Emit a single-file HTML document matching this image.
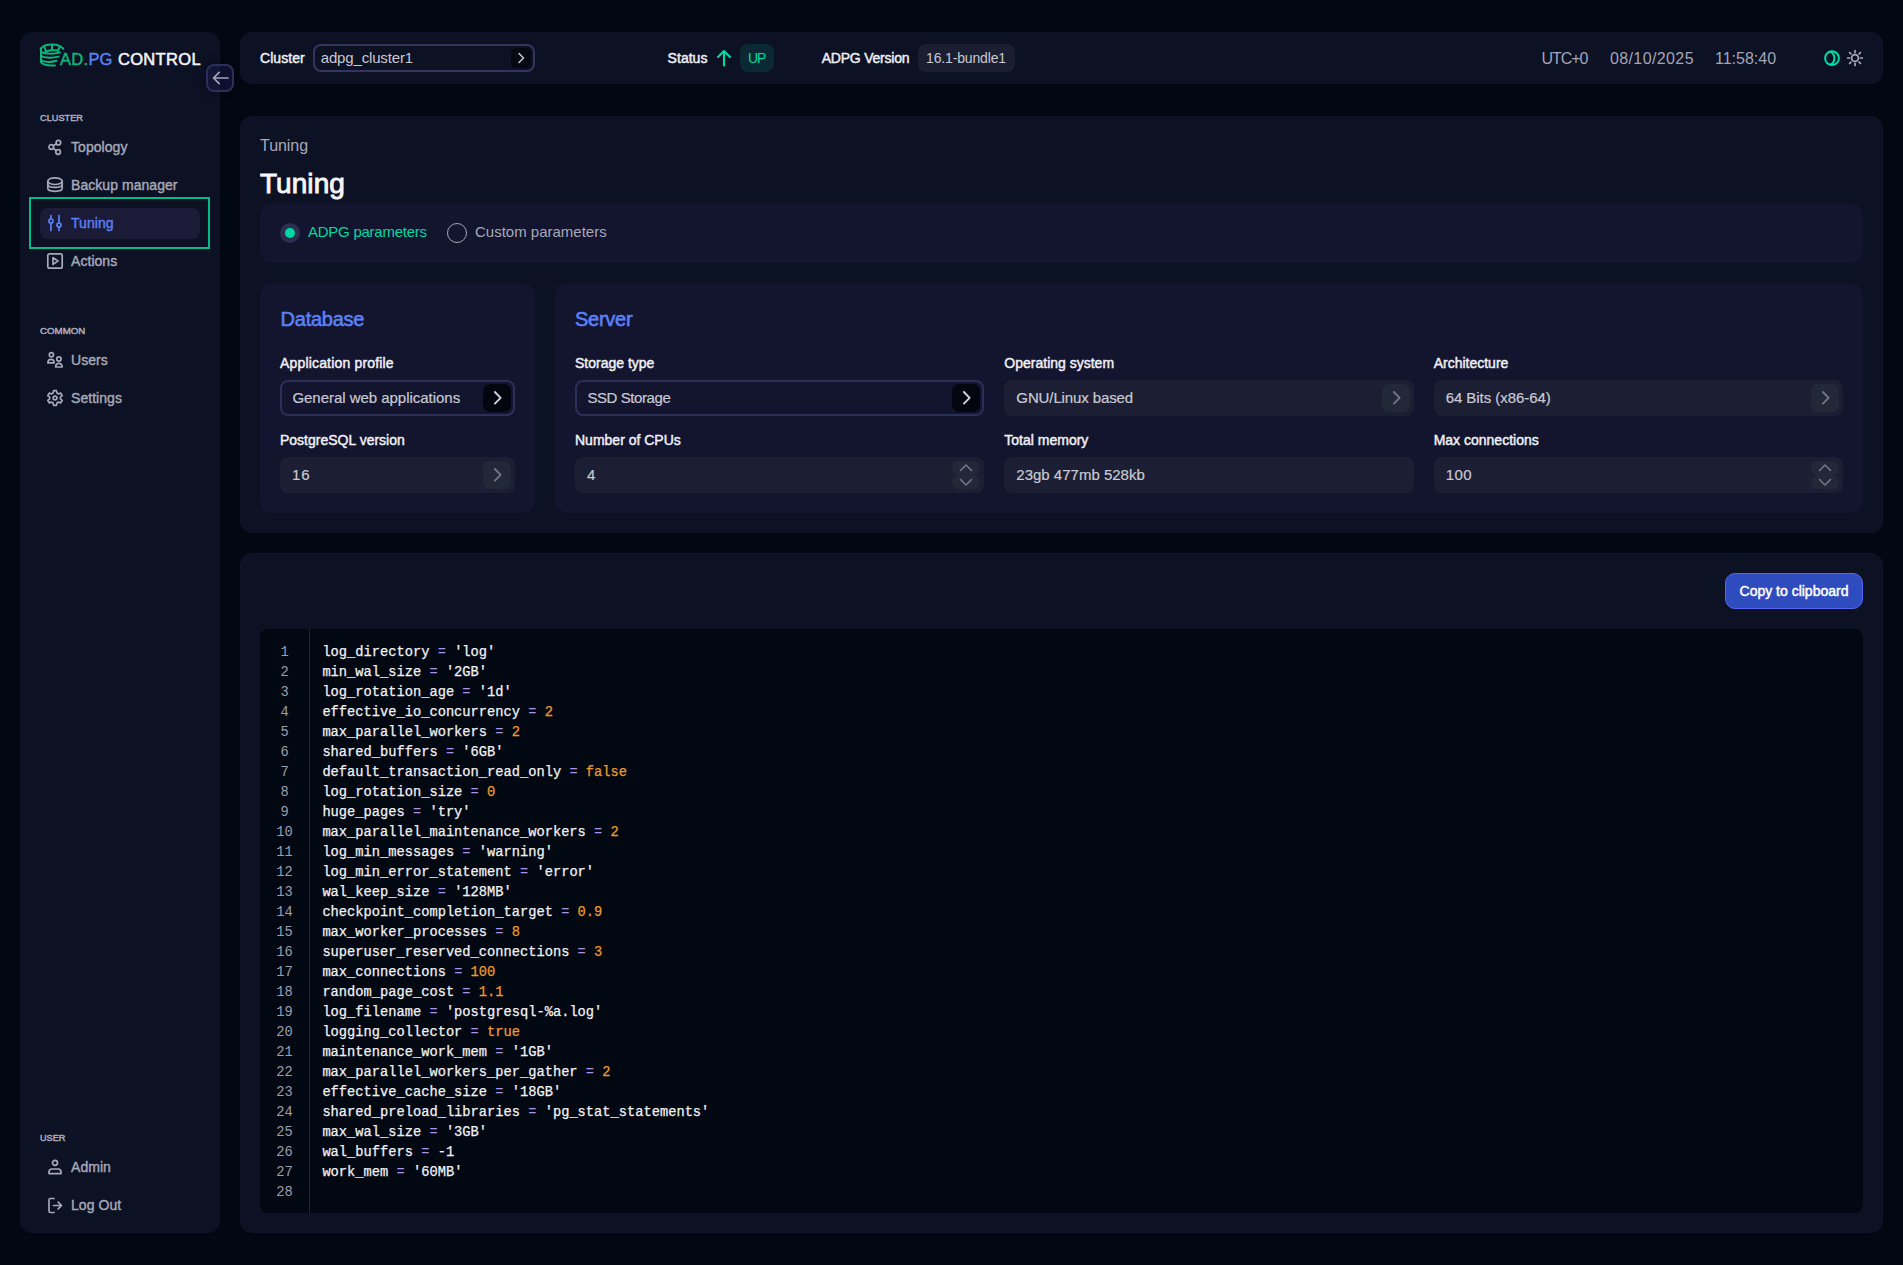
<!DOCTYPE html>
<html><head><meta charset="utf-8">
<style>
*{box-sizing:border-box;margin:0;padding:0}
html,body{width:1903px;height:1265px;overflow:hidden;background:#010812;font-family:"Liberation Sans",sans-serif}
.t,.r{position:absolute}
.t{white-space:nowrap}
</style></head><body>
<div class="r" style="left:20px;top:32px;width:200px;height:1201px;background:#0c1124;border-radius:12px;border:1px solid #10122a"></div>
<div class="r" style="left:240px;top:32px;width:1643px;height:52px;background:#0c1124;border-radius:12px;border:1px solid #10122a"></div>
<div class="r" style="left:240px;top:116px;width:1643px;height:417px;background:#0c1124;border-radius:12px;border:1px solid #10122a"></div>
<div class="r" style="left:240px;top:553px;width:1643px;height:680px;background:#0c1124;border-radius:12px;border:1px solid #10122a"></div>
<svg class="r" style="left:36px;top:40px" width="30" height="28" viewBox="0 0 30 28" fill="none"><g stroke="#0fb67b" stroke-width="2" stroke-linecap="round">
<path d="M5,8.5 V22"/>
<path d="M4.6,9 C6.5,5.5 12,4.4 16,4.4 C21,4.4 25.5,6.3 27.3,8.8"/>
<path d="M9.8,11.6 C13,10.2 18,10 22,10.6"/>
<path d="M8.4,6.8 L10,11.5 M16,5 V10.3 M23.4,7.4 L22,10.6"/>
<path d="M5,12 C9,14 18,14.2 24,12.4"/>
<path d="M5,16.2 C9,18 17,18.2 22.6,16.6"/>
<path d="M5,20.3 C9,22 16,22.2 20.6,20.8"/>
<path d="M5,22 C6.5,24.6 12,25.8 19,25.4"/>
</g></svg>
<div class="t" style="left:60px;top:50.83px;font-size:16.5px;line-height:16.5px;font-weight:400;letter-spacing:0px"><span style="color:#0fb67b;-webkit-text-stroke:0.45px #0fb67b;letter-spacing:0.35px">AD.</span><span style="color:#5b82f5;-webkit-text-stroke:0.4px #5b82f5">PG</span><span style="display:inline-block;width:5.5px"></span><span style="color:#f4f4f8;-webkit-text-stroke:0.55px #f4f4f8;letter-spacing:0.34px">CONTROL</span></div>
<div class="r" style="left:206px;top:64px;width:28px;height:28px;background:rgba(28,26,78,0.45);border-radius:8px;border:2px solid #2b2f5c;box-shadow:0 0 10px rgba(0,0,0,.45)"></div>
<svg class="r" style="left:206px;top:64px" width="28" height="28" viewBox="0 0 28 28" fill="none"><path d="M22,14 H7.5 M13.2,8.3 L7.5,14 L13.2,19.7" stroke="#a3a4b7" stroke-width="1.7" stroke-linecap="round" stroke-linejoin="round"/></svg>
<div class="t" style="left:40px;top:113.30px;font-size:9.8px;line-height:9.8px;font-weight:400;color:#a9abbd;-webkit-text-stroke:0.5px #a9abbd;transform:scaleX(0.939);transform-origin:0 0;">CLUSTER</div>
<div class="t" style="left:71px;top:140.15px;font-size:14px;line-height:14px;font-weight:400;color:#a7a8b8;-webkit-text-stroke:0.4px #a7a8b8;letter-spacing:0.05px;">Topology</div>
<svg class="r" style="left:46px;top:138px" width="18" height="18" viewBox="0 0 18 18" fill="none"><g stroke="#a7a8b8" stroke-width="1.7" stroke-linecap="round" stroke-linejoin="round" fill="none"><circle cx="12.4" cy="4.7" r="2.3"/><circle cx="5.3" cy="9" r="2.3"/><circle cx="12.1" cy="14" r="2.3"/><path d="M7.3,7.8 L10.3,5.9 M7.3,10.3 L10.2,12.6"/></g></svg>
<div class="t" style="left:71px;top:178.15px;font-size:14px;line-height:14px;font-weight:400;color:#a7a8b8;-webkit-text-stroke:0.4px #a7a8b8;letter-spacing:0.05px;">Backup manager</div>
<svg class="r" style="left:46px;top:176px" width="18" height="18" viewBox="0 0 18 18" fill="none"><g stroke="#a7a8b8" stroke-width="1.7" stroke-linecap="round" stroke-linejoin="round" fill="none"><ellipse cx="9" cy="5.15" rx="7.2" ry="3.35"/><path d="M1.8,5.15 V12.3 C1.8,14.2 5,15.3 9,15.3 C13,15.3 16.2,14.2 16.2,12.3 V5.15"/><path d="M1.8,8.4 C1.8,10.2 5,11.3 9,11.3 C13,11.3 16.2,10.2 16.2,8.4"/></g></svg>
<div class="r" style="left:29px;top:197px;width:181px;height:52px;background:transparent;border-radius:0px;border:2px solid #03bb8a"></div>
<div class="r" style="left:40px;top:208px;width:160px;height:31px;background:#1b1b38;border-radius:8px;"></div>
<div class="t" style="left:71px;top:216.15px;font-size:14px;line-height:14px;font-weight:400;color:#5b80f4;-webkit-text-stroke:0.4px #5b80f4;letter-spacing:0.05px;">Tuning</div>
<svg class="r" style="left:46px;top:214px" width="18" height="18" viewBox="0 0 18 18" fill="none"><g stroke="#5b80f4" stroke-width="1.7" stroke-linecap="round" stroke-linejoin="round" fill="none"><path d="M4.9,1.5 V16.5 M13,1.5 V16.5"/><circle cx="4.9" cy="7" r="2" fill="#1b1b38"/><circle cx="13" cy="11" r="2" fill="#1b1b38"/></g></svg>
<div class="t" style="left:71px;top:254.15px;font-size:14px;line-height:14px;font-weight:400;color:#a7a8b8;-webkit-text-stroke:0.4px #a7a8b8;letter-spacing:0.05px;">Actions</div>
<svg class="r" style="left:46px;top:252px" width="18" height="18" viewBox="0 0 18 18" fill="none"><g stroke="#a7a8b8" stroke-width="1.7" stroke-linecap="round" stroke-linejoin="round" fill="none"><rect x="1.8" y="1.8" width="14.4" height="14.4" rx="1.8"/><path d="M7,5.6 L12,9 L7,12.4 Z"/></g></svg>
<div class="t" style="left:40px;top:326.30px;font-size:9.8px;line-height:9.8px;font-weight:400;color:#a9abbd;-webkit-text-stroke:0.5px #a9abbd;transform:scaleX(0.992);transform-origin:0 0;">COMMON</div>
<div class="t" style="left:71px;top:353.15px;font-size:14px;line-height:14px;font-weight:400;color:#a7a8b8;-webkit-text-stroke:0.4px #a7a8b8;letter-spacing:0.05px;">Users</div>
<svg class="r" style="left:46px;top:351px" width="18" height="18" viewBox="0 0 18 18" fill="none"><g stroke="#a7a8b8" stroke-width="1.7" stroke-linecap="round" stroke-linejoin="round" fill="none"><circle cx="5.4" cy="3.8" r="2.1"/><path d="M1.9,11.9 C1.9,9.4 3.4,8.3 5,8.3 C6.6,8.3 8.1,9.4 8.1,11.9 Z"/><circle cx="12.9" cy="8" r="2.2"/><path d="M9.7,16 C9.7,13.5 11.2,12.3 12.9,12.3 C14.6,12.3 16.1,13.5 16.1,16 Z"/></g></svg>
<div class="t" style="left:71px;top:391.15px;font-size:14px;line-height:14px;font-weight:400;color:#a7a8b8;-webkit-text-stroke:0.4px #a7a8b8;letter-spacing:0.05px;">Settings</div>
<svg class="r" style="left:46px;top:389px" width="18" height="18" viewBox="0 0 18 18" fill="none"><g stroke="#a7a8b8" stroke-width="1.7" stroke-linecap="round" stroke-linejoin="round" fill="none"><path d="M7.6,1.6 H10.4 L10.9,3.9 L12.6,4.9 L14.8,4.1 L16.2,6.6 L14.4,8.1 V9.9 L16.2,11.4 L14.8,13.9 L12.6,13.1 L10.9,14.1 L10.4,16.4 H7.6 L7.1,14.1 L5.4,13.1 L3.2,13.9 L1.8,11.4 L3.6,9.9 V8.1 L1.8,6.6 L3.2,4.1 L5.4,4.9 L7.1,3.9 Z"/><circle cx="9" cy="9" r="1.9"/></g></svg>
<div class="t" style="left:40px;top:1133.30px;font-size:9.8px;line-height:9.8px;font-weight:400;color:#a9abbd;-webkit-text-stroke:0.5px #a9abbd;transform:scaleX(0.93);transform-origin:0 0;">USER</div>
<div class="t" style="left:71px;top:1160.15px;font-size:14px;line-height:14px;font-weight:400;color:#a7a8b8;-webkit-text-stroke:0.4px #a7a8b8;letter-spacing:0.05px;">Admin</div>
<svg class="r" style="left:46px;top:1158px" width="18" height="18" viewBox="0 0 18 18" fill="none"><g stroke="#a7a8b8" stroke-width="1.7" stroke-linecap="round" stroke-linejoin="round" fill="none"><circle cx="9" cy="4.8" r="2.5"/><path d="M3,15.6 V14 C3,12.3 4.3,11 6,11 H12 C13.7,11 15,12.3 15,14 V15.6 Z"/></g></svg>
<div class="t" style="left:71px;top:1198.15px;font-size:14px;line-height:14px;font-weight:400;color:#a7a8b8;-webkit-text-stroke:0.4px #a7a8b8;letter-spacing:0.05px;">Log Out</div>
<svg class="r" style="left:46px;top:1196px" width="18" height="18" viewBox="0 0 18 18" fill="none"><g stroke="#a7a8b8" stroke-width="1.7" stroke-linecap="round" stroke-linejoin="round" fill="none"><path d="M8,2.5 H4.4 C3.6,2.5 3,3.1 3,3.9 V15.1 C3,15.9 3.6,16.5 4.4,16.5 H8"/><path d="M7.5,9.5 H15.5 M12.2,6.2 L15.5,9.5 L12.2,12.8"/></g></svg>
<div class="t" style="left:260px;top:51.15px;font-size:14px;line-height:14px;font-weight:400;color:#f0f0f5;-webkit-text-stroke:0.45px #f0f0f5;letter-spacing:0.05px;">Cluster</div>
<div class="r" style="left:313px;top:44px;width:222px;height:28px;background:transparent;border-radius:8px;border:2px solid #34345f"></div>
<div class="t" style="left:320.7px;top:49.90px;font-size:15px;line-height:15px;font-weight:400;color:#c9c9d3;letter-spacing:-0.15px;">adpg_cluster1</div>
<div class="r" style="left:511px;top:48px;width:20px;height:20px;background:#060812;border-radius:5px;"></div>
<svg class="r" style="left:516px;top:52px" width="10" height="12" viewBox="0 0 10 12" fill="none"><path d="M3,1.5 L7.5,6 L3,10.5" stroke="#c8c9d4" stroke-width="1.5" stroke-linecap="round" stroke-linejoin="round"/></svg>
<div class="t" style="left:667.6px;top:51.15px;font-size:14px;line-height:14px;font-weight:400;color:#f0f0f5;-webkit-text-stroke:0.45px #f0f0f5;letter-spacing:0.03px;">Status</div>
<svg class="r" style="left:716px;top:48px" width="16" height="20" viewBox="0 0 16 20" fill="none"><path d="M8,17.5 V3 M2,9 L8,3 L14,9" stroke="#00dba5" stroke-width="2.1" stroke-linecap="round" stroke-linejoin="round"/></svg>
<div class="r" style="left:740px;top:44px;width:34px;height:28px;background:#0b2934;border-radius:8px;"></div>
<div class="t" style="left:748px;top:51.15px;font-size:14px;line-height:14px;font-weight:400;color:#00dba5;letter-spacing:-1.0px;">UP</div>
<div class="t" style="left:821.7px;top:51.15px;font-size:14px;line-height:14px;font-weight:400;color:#f0f0f5;-webkit-text-stroke:0.45px #f0f0f5;letter-spacing:-0.22px;">ADPG Version</div>
<div class="r" style="left:918px;top:44px;width:97px;height:28px;background:#1b1e30;border-radius:8px;"></div>
<div class="t" style="left:926px;top:51.15px;font-size:14px;line-height:14px;font-weight:400;color:#c9c9d3;letter-spacing:-0.15px;">16.1-bundle1</div>
<div class="t" style="left:1541.6px;top:51.26px;font-size:16px;line-height:16px;font-weight:400;color:#a3a5b6;letter-spacing:-1.1px;">UTC+0</div>
<div class="t" style="left:1609.9px;top:51.26px;font-size:16px;line-height:16px;font-weight:400;color:#a3a5b6;letter-spacing:0.4px;">08/10/2025</div>
<div class="t" style="left:1715px;top:51.26px;font-size:16px;line-height:16px;font-weight:400;color:#a3a5b6;">11:58:40</div>
<svg class="r" style="left:1822px;top:48px" width="20" height="20" viewBox="0 0 20 20" fill="none"><g stroke="#00dba5" stroke-width="2" fill="none"><circle cx="10" cy="10.2" r="6.9"/><path d="M8.2,3.6 C11.3,5.2 12.4,7.6 12.4,10.2 C12.4,12.8 11.3,15.2 8.2,16.8"/></g></svg>
<svg class="r" style="left:1845px;top:48px" width="20" height="20" viewBox="0 0 20 20" fill="none"><g stroke="#a9aabb" stroke-width="1.7" stroke-linecap="round" fill="none"><circle cx="10" cy="10" r="3.4"/><path d="M10,2.6 V4.6 M10,15.4 V17.4 M2.6,10 H4.6 M15.4,10 H17.4 M4.6,4.6 L5.9,5.9 M14.1,14.1 L15.4,15.4 M4.6,15.4 L5.9,14.1 M14.1,5.9 L15.4,4.6"/></g></svg>
<div class="t" style="left:260px;top:138.46px;font-size:16px;line-height:16px;font-weight:400;color:#a7a8b8;letter-spacing:-0.05px;">Tuning</div>
<div class="t" style="left:260px;top:170.30px;font-size:28px;line-height:28px;font-weight:400;color:#f6f6fa;-webkit-text-stroke:0.9px #f6f6fa;letter-spacing:0.05px;">Tuning</div>
<div class="r" style="left:260px;top:203px;width:1603px;height:60px;background:#13142e;border-radius:12px;"></div>
<div class="r" style="left:280px;top:223px;width:20px;height:20px;background:#2b3051;border-radius:10px;"></div>
<div class="r" style="left:285px;top:228px;width:10px;height:10px;background:#00d8a3;border-radius:5px;"></div>
<div class="t" style="left:308px;top:224.10px;font-size:15px;line-height:15px;font-weight:400;color:#00d8a3;letter-spacing:-0.25px;">ADPG parameters</div>
<div class="r" style="left:447px;top:223px;width:20px;height:20px;background:transparent;border-radius:10px;border:1.5px solid #a6a7b6"></div>
<div class="t" style="left:475px;top:224.10px;font-size:15px;line-height:15px;font-weight:400;color:#a7a8b8;">Custom parameters</div>
<div class="r" style="left:260px;top:283px;width:275px;height:230px;background:#13142e;border-radius:12px;"></div>
<div class="r" style="left:555px;top:283px;width:1308px;height:230px;background:#13142e;border-radius:12px;"></div>
<div class="t" style="left:280.6px;top:308.57px;font-size:20px;line-height:20px;font-weight:400;color:#5b80f4;-webkit-text-stroke:0.6px #5b80f4;letter-spacing:-0.25px;">Database</div>
<div class="t" style="left:575px;top:308.57px;font-size:20px;line-height:20px;font-weight:400;color:#5b80f4;-webkit-text-stroke:0.6px #5b80f4;letter-spacing:-0.25px;">Server</div>
<div class="t" style="left:280px;top:356.15px;font-size:14px;line-height:14px;font-weight:400;color:#f0f0f5;-webkit-text-stroke:0.45px #f0f0f5;letter-spacing:0.17px;">Application profile</div>
<div class="r" style="left:280px;top:380px;width:235px;height:36px;background:transparent;border-radius:8px;border:2px solid #2c3058"></div>
<div class="t" style="left:292.4px;top:389.60px;font-size:15px;line-height:15px;font-weight:400;color:#c9c9d3;-webkit-text-stroke:0.2px #c9c9d3;letter-spacing:-0.03px;">General web applications</div>
<div class="r" style="left:483px;top:384px;width:28px;height:28px;background:#03060e;border-radius:7px;"></div>
<svg class="r" style="left:492px;top:390px" width="10" height="16" viewBox="0 0 10 16" fill="none"><path d="M2.9,2 L8.6,7.8 L2.9,13.6" stroke="#d2d3dc" stroke-width="1.9" stroke-linecap="round" stroke-linejoin="round"/></svg>
<div class="t" style="left:280px;top:433.15px;font-size:14px;line-height:14px;font-weight:400;color:#f0f0f5;-webkit-text-stroke:0.45px #f0f0f5;">PostgreSQL version</div>
<div class="r" style="left:280px;top:457px;width:235px;height:36px;background:#1c1f34;border-radius:8px;"></div>
<div class="t" style="left:292px;top:466.60px;font-size:15px;line-height:15px;font-weight:400;color:#c9c9d3;-webkit-text-stroke:0.2px #c9c9d3;letter-spacing:0.8px;">16</div>
<div class="r" style="left:483px;top:461px;width:28px;height:28px;background:#232839;border-radius:7px;"></div>
<svg class="r" style="left:492px;top:467px" width="10" height="16" viewBox="0 0 10 16" fill="none"><path d="M2.9,2 L8.6,7.8 L2.9,13.6" stroke="#737586" stroke-width="1.9" stroke-linecap="round" stroke-linejoin="round"/></svg>
<div class="t" style="left:575px;top:356.15px;font-size:14px;line-height:14px;font-weight:400;color:#f0f0f5;-webkit-text-stroke:0.45px #f0f0f5;">Storage type</div>
<div class="t" style="left:1004.33px;top:356.15px;font-size:14px;line-height:14px;font-weight:400;color:#f0f0f5;-webkit-text-stroke:0.45px #f0f0f5;">Operating system</div>
<div class="t" style="left:1433.67px;top:356.15px;font-size:14px;line-height:14px;font-weight:400;color:#f0f0f5;-webkit-text-stroke:0.45px #f0f0f5;">Architecture</div>
<div class="r" style="left:575px;top:380px;width:409.33000000000004px;height:36px;background:transparent;border-radius:8px;border:2px solid #2c3058"></div>
<div class="t" style="left:587.4px;top:389.60px;font-size:15px;line-height:15px;font-weight:400;color:#c9c9d3;-webkit-text-stroke:0.2px #c9c9d3;letter-spacing:-0.42px;">SSD Storage</div>
<div class="r" style="left:952.33px;top:384px;width:28.0px;height:28px;background:#03060e;border-radius:7px;"></div>
<svg class="r" style="left:961.33px;top:390px" width="10" height="16" viewBox="0 0 10 16" fill="none"><path d="M2.9,2 L8.6,7.8 L2.9,13.6" stroke="#d2d3dc" stroke-width="1.9" stroke-linecap="round" stroke-linejoin="round"/></svg>
<div class="r" style="left:1004.33px;top:380px;width:409.34000000000003px;height:36px;background:#1c1f34;border-radius:8px;"></div>
<div class="t" style="left:1016.33px;top:389.60px;font-size:15px;line-height:15px;font-weight:400;color:#c9c9d3;-webkit-text-stroke:0.2px #c9c9d3;letter-spacing:-0.11px;">GNU/Linux based</div>
<div class="r" style="left:1381.67px;top:384px;width:28.0px;height:28px;background:#232839;border-radius:7px;"></div>
<svg class="r" style="left:1390.67px;top:390px" width="10" height="16" viewBox="0 0 10 16" fill="none"><path d="M2.9,2 L8.6,7.8 L2.9,13.6" stroke="#737586" stroke-width="1.9" stroke-linecap="round" stroke-linejoin="round"/></svg>
<div class="r" style="left:1433.67px;top:380px;width:409.3299999999999px;height:36px;background:#1c1f34;border-radius:8px;"></div>
<div class="t" style="left:1445.67px;top:389.60px;font-size:15px;line-height:15px;font-weight:400;color:#c9c9d3;-webkit-text-stroke:0.2px #c9c9d3;letter-spacing:-0.05px;">64 Bits (x86-64)</div>
<div class="r" style="left:1811px;top:384px;width:28px;height:28px;background:#232839;border-radius:7px;"></div>
<svg class="r" style="left:1820px;top:390px" width="10" height="16" viewBox="0 0 10 16" fill="none"><path d="M2.9,2 L8.6,7.8 L2.9,13.6" stroke="#737586" stroke-width="1.9" stroke-linecap="round" stroke-linejoin="round"/></svg>
<div class="t" style="left:575px;top:433.15px;font-size:14px;line-height:14px;font-weight:400;color:#f0f0f5;-webkit-text-stroke:0.45px #f0f0f5;">Number of CPUs</div>
<div class="t" style="left:1004.33px;top:433.15px;font-size:14px;line-height:14px;font-weight:400;color:#f0f0f5;-webkit-text-stroke:0.45px #f0f0f5;">Total memory</div>
<div class="t" style="left:1433.67px;top:433.15px;font-size:14px;line-height:14px;font-weight:400;color:#f0f0f5;-webkit-text-stroke:0.45px #f0f0f5;">Max connections</div>
<div class="r" style="left:575px;top:457px;width:409.33000000000004px;height:36px;background:#1c1f34;border-radius:8px;"></div>
<div class="t" style="left:587px;top:466.60px;font-size:15px;line-height:15px;font-weight:400;color:#c9c9d3;-webkit-text-stroke:0.2px #c9c9d3;letter-spacing:-0.25px;">4</div>
<div class="r" style="left:952.33px;top:461px;width:28.0px;height:14px;background:#232839;border-radius:7px;"></div>
<div class="r" style="left:952.33px;top:475px;width:28.0px;height:14px;background:#232839;border-radius:7px;"></div>
<svg class="r" style="left:959.33px;top:462px" width="14" height="26" viewBox="0 0 14 26" fill="none"><g stroke="#737586" stroke-width="1.6" stroke-linecap="round" stroke-linejoin="round"><path d="M1.5,8.5 L7,3 L12.5,8.5"/><path d="M1.5,17.5 L7,23 L12.5,17.5"/></g></svg>
<div class="r" style="left:1004.33px;top:457px;width:409.34000000000003px;height:36px;background:#1c1f34;border-radius:8px;"></div>
<div class="t" style="left:1016.33px;top:466.60px;font-size:15px;line-height:15px;font-weight:400;color:#c9c9d3;-webkit-text-stroke:0.2px #c9c9d3;">23gb 477mb 528kb</div>
<div class="r" style="left:1433.67px;top:457px;width:409.3299999999999px;height:36px;background:#1c1f34;border-radius:8px;"></div>
<div class="t" style="left:1445.67px;top:466.60px;font-size:15px;line-height:15px;font-weight:400;color:#c9c9d3;-webkit-text-stroke:0.2px #c9c9d3;letter-spacing:0.45px;">100</div>
<div class="r" style="left:1811px;top:461px;width:28px;height:14px;background:#232839;border-radius:7px;"></div>
<div class="r" style="left:1811px;top:475px;width:28px;height:14px;background:#232839;border-radius:7px;"></div>
<svg class="r" style="left:1818px;top:462px" width="14" height="26" viewBox="0 0 14 26" fill="none"><g stroke="#737586" stroke-width="1.6" stroke-linecap="round" stroke-linejoin="round"><path d="M1.5,8.5 L7,3 L12.5,8.5"/><path d="M1.5,17.5 L7,23 L12.5,17.5"/></g></svg>
<div class="r" style="left:1725px;top:573px;width:138px;height:36px;background:#2f4cbf;border-radius:10px;border:1px solid #5567f4"></div>
<div class="t" style="left:1725px;top:583.65px;font-size:14px;line-height:14px;font-weight:400;color:#ffffff;-webkit-text-stroke:0.45px #ffffff;text-align:center;width:138px;">Copy to clipboard</div>
<div class="r" style="left:260px;top:629px;width:1603px;height:584px;background:#020812;border-radius:8px;"></div>
<div class="r" style="left:309px;top:629px;width:1px;height:584px;background:#222735;border-radius:0px;"></div>
<div class="t" style="left:260px;top:646.38px;font-size:13.73px;line-height:13.73px;font-weight:400;color:#9c9eae;font-family:'Liberation Mono',monospace;text-align:center;width:49px;">1</div>
<div class="t" style="left:322.4px;top:646.38px;font-size:13.73px;line-height:13.73px;font-weight:400;color:#f2f2f4;font-family:'Liberation Mono',monospace;-webkit-text-stroke:0.25px currentColor;"><span style="color:#f2f2f4">log_directory</span> <span style="color:#a996ea;-webkit-text-stroke:0">=</span> <span style="color:#f2f2f4">'log'</span></div>
<div class="t" style="left:260px;top:666.38px;font-size:13.73px;line-height:13.73px;font-weight:400;color:#9c9eae;font-family:'Liberation Mono',monospace;text-align:center;width:49px;">2</div>
<div class="t" style="left:322.4px;top:666.38px;font-size:13.73px;line-height:13.73px;font-weight:400;color:#f2f2f4;font-family:'Liberation Mono',monospace;-webkit-text-stroke:0.25px currentColor;"><span style="color:#f2f2f4">min_wal_size</span> <span style="color:#a996ea;-webkit-text-stroke:0">=</span> <span style="color:#f2f2f4">'2GB'</span></div>
<div class="t" style="left:260px;top:686.38px;font-size:13.73px;line-height:13.73px;font-weight:400;color:#9c9eae;font-family:'Liberation Mono',monospace;text-align:center;width:49px;">3</div>
<div class="t" style="left:322.4px;top:686.38px;font-size:13.73px;line-height:13.73px;font-weight:400;color:#f2f2f4;font-family:'Liberation Mono',monospace;-webkit-text-stroke:0.25px currentColor;"><span style="color:#f2f2f4">log_rotation_age</span> <span style="color:#a996ea;-webkit-text-stroke:0">=</span> <span style="color:#f2f2f4">'1d'</span></div>
<div class="t" style="left:260px;top:706.38px;font-size:13.73px;line-height:13.73px;font-weight:400;color:#9c9eae;font-family:'Liberation Mono',monospace;text-align:center;width:49px;">4</div>
<div class="t" style="left:322.4px;top:706.38px;font-size:13.73px;line-height:13.73px;font-weight:400;color:#f2f2f4;font-family:'Liberation Mono',monospace;-webkit-text-stroke:0.25px currentColor;"><span style="color:#f2f2f4">effective_io_concurrency</span> <span style="color:#a996ea;-webkit-text-stroke:0">=</span> <span style="color:#ec9a2e">2</span></div>
<div class="t" style="left:260px;top:726.38px;font-size:13.73px;line-height:13.73px;font-weight:400;color:#9c9eae;font-family:'Liberation Mono',monospace;text-align:center;width:49px;">5</div>
<div class="t" style="left:322.4px;top:726.38px;font-size:13.73px;line-height:13.73px;font-weight:400;color:#f2f2f4;font-family:'Liberation Mono',monospace;-webkit-text-stroke:0.25px currentColor;"><span style="color:#f2f2f4">max_parallel_workers</span> <span style="color:#a996ea;-webkit-text-stroke:0">=</span> <span style="color:#ec9a2e">2</span></div>
<div class="t" style="left:260px;top:746.38px;font-size:13.73px;line-height:13.73px;font-weight:400;color:#9c9eae;font-family:'Liberation Mono',monospace;text-align:center;width:49px;">6</div>
<div class="t" style="left:322.4px;top:746.38px;font-size:13.73px;line-height:13.73px;font-weight:400;color:#f2f2f4;font-family:'Liberation Mono',monospace;-webkit-text-stroke:0.25px currentColor;"><span style="color:#f2f2f4">shared_buffers</span> <span style="color:#a996ea;-webkit-text-stroke:0">=</span> <span style="color:#f2f2f4">'6GB'</span></div>
<div class="t" style="left:260px;top:766.38px;font-size:13.73px;line-height:13.73px;font-weight:400;color:#9c9eae;font-family:'Liberation Mono',monospace;text-align:center;width:49px;">7</div>
<div class="t" style="left:322.4px;top:766.38px;font-size:13.73px;line-height:13.73px;font-weight:400;color:#f2f2f4;font-family:'Liberation Mono',monospace;-webkit-text-stroke:0.25px currentColor;"><span style="color:#f2f2f4">default_transaction_read_only</span> <span style="color:#a996ea;-webkit-text-stroke:0">=</span> <span style="color:#ec9a2e">false</span></div>
<div class="t" style="left:260px;top:786.38px;font-size:13.73px;line-height:13.73px;font-weight:400;color:#9c9eae;font-family:'Liberation Mono',monospace;text-align:center;width:49px;">8</div>
<div class="t" style="left:322.4px;top:786.38px;font-size:13.73px;line-height:13.73px;font-weight:400;color:#f2f2f4;font-family:'Liberation Mono',monospace;-webkit-text-stroke:0.25px currentColor;"><span style="color:#f2f2f4">log_rotation_size</span> <span style="color:#a996ea;-webkit-text-stroke:0">=</span> <span style="color:#ec9a2e">0</span></div>
<div class="t" style="left:260px;top:806.38px;font-size:13.73px;line-height:13.73px;font-weight:400;color:#9c9eae;font-family:'Liberation Mono',monospace;text-align:center;width:49px;">9</div>
<div class="t" style="left:322.4px;top:806.38px;font-size:13.73px;line-height:13.73px;font-weight:400;color:#f2f2f4;font-family:'Liberation Mono',monospace;-webkit-text-stroke:0.25px currentColor;"><span style="color:#f2f2f4">huge_pages</span> <span style="color:#a996ea;-webkit-text-stroke:0">=</span> <span style="color:#f2f2f4">'try'</span></div>
<div class="t" style="left:260px;top:826.38px;font-size:13.73px;line-height:13.73px;font-weight:400;color:#9c9eae;font-family:'Liberation Mono',monospace;text-align:center;width:49px;">10</div>
<div class="t" style="left:322.4px;top:826.38px;font-size:13.73px;line-height:13.73px;font-weight:400;color:#f2f2f4;font-family:'Liberation Mono',monospace;-webkit-text-stroke:0.25px currentColor;"><span style="color:#f2f2f4">max_parallel_maintenance_workers</span> <span style="color:#a996ea;-webkit-text-stroke:0">=</span> <span style="color:#ec9a2e">2</span></div>
<div class="t" style="left:260px;top:846.38px;font-size:13.73px;line-height:13.73px;font-weight:400;color:#9c9eae;font-family:'Liberation Mono',monospace;text-align:center;width:49px;">11</div>
<div class="t" style="left:322.4px;top:846.38px;font-size:13.73px;line-height:13.73px;font-weight:400;color:#f2f2f4;font-family:'Liberation Mono',monospace;-webkit-text-stroke:0.25px currentColor;"><span style="color:#f2f2f4">log_min_messages</span> <span style="color:#a996ea;-webkit-text-stroke:0">=</span> <span style="color:#f2f2f4">'warning'</span></div>
<div class="t" style="left:260px;top:866.38px;font-size:13.73px;line-height:13.73px;font-weight:400;color:#9c9eae;font-family:'Liberation Mono',monospace;text-align:center;width:49px;">12</div>
<div class="t" style="left:322.4px;top:866.38px;font-size:13.73px;line-height:13.73px;font-weight:400;color:#f2f2f4;font-family:'Liberation Mono',monospace;-webkit-text-stroke:0.25px currentColor;"><span style="color:#f2f2f4">log_min_error_statement</span> <span style="color:#a996ea;-webkit-text-stroke:0">=</span> <span style="color:#f2f2f4">'error'</span></div>
<div class="t" style="left:260px;top:886.38px;font-size:13.73px;line-height:13.73px;font-weight:400;color:#9c9eae;font-family:'Liberation Mono',monospace;text-align:center;width:49px;">13</div>
<div class="t" style="left:322.4px;top:886.38px;font-size:13.73px;line-height:13.73px;font-weight:400;color:#f2f2f4;font-family:'Liberation Mono',monospace;-webkit-text-stroke:0.25px currentColor;"><span style="color:#f2f2f4">wal_keep_size</span> <span style="color:#a996ea;-webkit-text-stroke:0">=</span> <span style="color:#f2f2f4">'128MB'</span></div>
<div class="t" style="left:260px;top:906.38px;font-size:13.73px;line-height:13.73px;font-weight:400;color:#9c9eae;font-family:'Liberation Mono',monospace;text-align:center;width:49px;">14</div>
<div class="t" style="left:322.4px;top:906.38px;font-size:13.73px;line-height:13.73px;font-weight:400;color:#f2f2f4;font-family:'Liberation Mono',monospace;-webkit-text-stroke:0.25px currentColor;"><span style="color:#f2f2f4">checkpoint_completion_target</span> <span style="color:#a996ea;-webkit-text-stroke:0">=</span> <span style="color:#ec9a2e">0.9</span></div>
<div class="t" style="left:260px;top:926.38px;font-size:13.73px;line-height:13.73px;font-weight:400;color:#9c9eae;font-family:'Liberation Mono',monospace;text-align:center;width:49px;">15</div>
<div class="t" style="left:322.4px;top:926.38px;font-size:13.73px;line-height:13.73px;font-weight:400;color:#f2f2f4;font-family:'Liberation Mono',monospace;-webkit-text-stroke:0.25px currentColor;"><span style="color:#f2f2f4">max_worker_processes</span> <span style="color:#a996ea;-webkit-text-stroke:0">=</span> <span style="color:#ec9a2e">8</span></div>
<div class="t" style="left:260px;top:946.38px;font-size:13.73px;line-height:13.73px;font-weight:400;color:#9c9eae;font-family:'Liberation Mono',monospace;text-align:center;width:49px;">16</div>
<div class="t" style="left:322.4px;top:946.38px;font-size:13.73px;line-height:13.73px;font-weight:400;color:#f2f2f4;font-family:'Liberation Mono',monospace;-webkit-text-stroke:0.25px currentColor;"><span style="color:#f2f2f4">superuser_reserved_connections</span> <span style="color:#a996ea;-webkit-text-stroke:0">=</span> <span style="color:#ec9a2e">3</span></div>
<div class="t" style="left:260px;top:966.38px;font-size:13.73px;line-height:13.73px;font-weight:400;color:#9c9eae;font-family:'Liberation Mono',monospace;text-align:center;width:49px;">17</div>
<div class="t" style="left:322.4px;top:966.38px;font-size:13.73px;line-height:13.73px;font-weight:400;color:#f2f2f4;font-family:'Liberation Mono',monospace;-webkit-text-stroke:0.25px currentColor;"><span style="color:#f2f2f4">max_connections</span> <span style="color:#a996ea;-webkit-text-stroke:0">=</span> <span style="color:#ec9a2e">100</span></div>
<div class="t" style="left:260px;top:986.38px;font-size:13.73px;line-height:13.73px;font-weight:400;color:#9c9eae;font-family:'Liberation Mono',monospace;text-align:center;width:49px;">18</div>
<div class="t" style="left:322.4px;top:986.38px;font-size:13.73px;line-height:13.73px;font-weight:400;color:#f2f2f4;font-family:'Liberation Mono',monospace;-webkit-text-stroke:0.25px currentColor;"><span style="color:#f2f2f4">random_page_cost</span> <span style="color:#a996ea;-webkit-text-stroke:0">=</span> <span style="color:#ec9a2e">1.1</span></div>
<div class="t" style="left:260px;top:1006.38px;font-size:13.73px;line-height:13.73px;font-weight:400;color:#9c9eae;font-family:'Liberation Mono',monospace;text-align:center;width:49px;">19</div>
<div class="t" style="left:322.4px;top:1006.38px;font-size:13.73px;line-height:13.73px;font-weight:400;color:#f2f2f4;font-family:'Liberation Mono',monospace;-webkit-text-stroke:0.25px currentColor;"><span style="color:#f2f2f4">log_filename</span> <span style="color:#a996ea;-webkit-text-stroke:0">=</span> <span style="color:#f2f2f4">'postgresql-%a.log'</span></div>
<div class="t" style="left:260px;top:1026.38px;font-size:13.73px;line-height:13.73px;font-weight:400;color:#9c9eae;font-family:'Liberation Mono',monospace;text-align:center;width:49px;">20</div>
<div class="t" style="left:322.4px;top:1026.38px;font-size:13.73px;line-height:13.73px;font-weight:400;color:#f2f2f4;font-family:'Liberation Mono',monospace;-webkit-text-stroke:0.25px currentColor;"><span style="color:#f2f2f4">logging_collector</span> <span style="color:#a996ea;-webkit-text-stroke:0">=</span> <span style="color:#ec9a2e">true</span></div>
<div class="t" style="left:260px;top:1046.38px;font-size:13.73px;line-height:13.73px;font-weight:400;color:#9c9eae;font-family:'Liberation Mono',monospace;text-align:center;width:49px;">21</div>
<div class="t" style="left:322.4px;top:1046.38px;font-size:13.73px;line-height:13.73px;font-weight:400;color:#f2f2f4;font-family:'Liberation Mono',monospace;-webkit-text-stroke:0.25px currentColor;"><span style="color:#f2f2f4">maintenance_work_mem</span> <span style="color:#a996ea;-webkit-text-stroke:0">=</span> <span style="color:#f2f2f4">'1GB'</span></div>
<div class="t" style="left:260px;top:1066.38px;font-size:13.73px;line-height:13.73px;font-weight:400;color:#9c9eae;font-family:'Liberation Mono',monospace;text-align:center;width:49px;">22</div>
<div class="t" style="left:322.4px;top:1066.38px;font-size:13.73px;line-height:13.73px;font-weight:400;color:#f2f2f4;font-family:'Liberation Mono',monospace;-webkit-text-stroke:0.25px currentColor;"><span style="color:#f2f2f4">max_parallel_workers_per_gather</span> <span style="color:#a996ea;-webkit-text-stroke:0">=</span> <span style="color:#ec9a2e">2</span></div>
<div class="t" style="left:260px;top:1086.38px;font-size:13.73px;line-height:13.73px;font-weight:400;color:#9c9eae;font-family:'Liberation Mono',monospace;text-align:center;width:49px;">23</div>
<div class="t" style="left:322.4px;top:1086.38px;font-size:13.73px;line-height:13.73px;font-weight:400;color:#f2f2f4;font-family:'Liberation Mono',monospace;-webkit-text-stroke:0.25px currentColor;"><span style="color:#f2f2f4">effective_cache_size</span> <span style="color:#a996ea;-webkit-text-stroke:0">=</span> <span style="color:#f2f2f4">'18GB'</span></div>
<div class="t" style="left:260px;top:1106.38px;font-size:13.73px;line-height:13.73px;font-weight:400;color:#9c9eae;font-family:'Liberation Mono',monospace;text-align:center;width:49px;">24</div>
<div class="t" style="left:322.4px;top:1106.38px;font-size:13.73px;line-height:13.73px;font-weight:400;color:#f2f2f4;font-family:'Liberation Mono',monospace;-webkit-text-stroke:0.25px currentColor;"><span style="color:#f2f2f4">shared_preload_libraries</span> <span style="color:#a996ea;-webkit-text-stroke:0">=</span> <span style="color:#f2f2f4">'pg_stat_statements'</span></div>
<div class="t" style="left:260px;top:1126.38px;font-size:13.73px;line-height:13.73px;font-weight:400;color:#9c9eae;font-family:'Liberation Mono',monospace;text-align:center;width:49px;">25</div>
<div class="t" style="left:322.4px;top:1126.38px;font-size:13.73px;line-height:13.73px;font-weight:400;color:#f2f2f4;font-family:'Liberation Mono',monospace;-webkit-text-stroke:0.25px currentColor;"><span style="color:#f2f2f4">max_wal_size</span> <span style="color:#a996ea;-webkit-text-stroke:0">=</span> <span style="color:#f2f2f4">'3GB'</span></div>
<div class="t" style="left:260px;top:1146.38px;font-size:13.73px;line-height:13.73px;font-weight:400;color:#9c9eae;font-family:'Liberation Mono',monospace;text-align:center;width:49px;">26</div>
<div class="t" style="left:322.4px;top:1146.38px;font-size:13.73px;line-height:13.73px;font-weight:400;color:#f2f2f4;font-family:'Liberation Mono',monospace;-webkit-text-stroke:0.25px currentColor;"><span style="color:#f2f2f4">wal_buffers</span> <span style="color:#a996ea;-webkit-text-stroke:0">=</span> <span style="color:#f2f2f4">-1</span></div>
<div class="t" style="left:260px;top:1166.38px;font-size:13.73px;line-height:13.73px;font-weight:400;color:#9c9eae;font-family:'Liberation Mono',monospace;text-align:center;width:49px;">27</div>
<div class="t" style="left:322.4px;top:1166.38px;font-size:13.73px;line-height:13.73px;font-weight:400;color:#f2f2f4;font-family:'Liberation Mono',monospace;-webkit-text-stroke:0.25px currentColor;"><span style="color:#f2f2f4">work_mem</span> <span style="color:#a996ea;-webkit-text-stroke:0">=</span> <span style="color:#f2f2f4">'60MB'</span></div>
<div class="t" style="left:260px;top:1186.38px;font-size:13.73px;line-height:13.73px;font-weight:400;color:#9c9eae;font-family:'Liberation Mono',monospace;text-align:center;width:49px;">28</div>
</body></html>
